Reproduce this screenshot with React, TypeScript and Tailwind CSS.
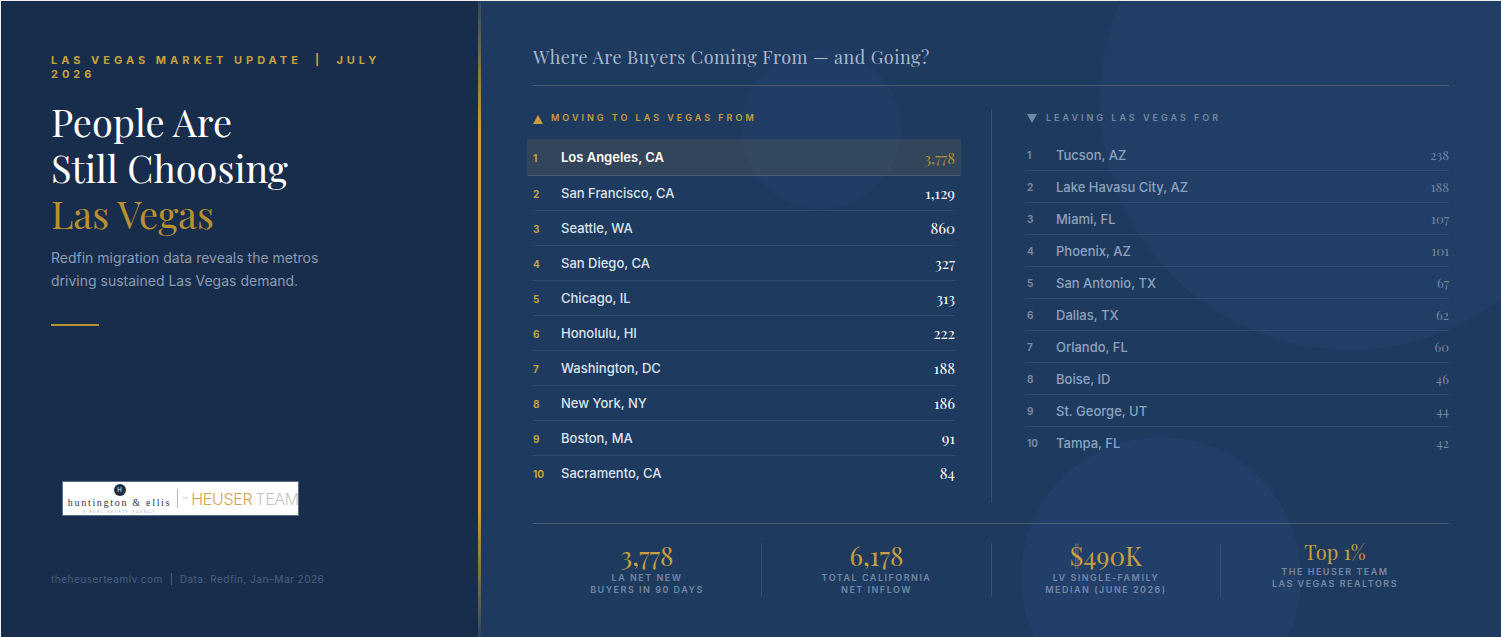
const serif = "font-['Playfair_Display','Liberation_Serif',serif]";

const toRows = [
  ["Los Angeles, CA", "3,778"],
  ["San Francisco, CA", "1,129"],
  ["Seattle, WA", "860"],
  ["San Diego, CA", "327"],
  ["Chicago, IL", "313"],
  ["Honolulu, HI", "222"],
  ["Washington, DC", "188"],
  ["New York, NY", "186"],
  ["Boston, MA", "91"],
  ["Sacramento, CA", "84"],
];
const fromRows = [
  ["Tucson, AZ", "238"],
  ["Lake Havasu City, AZ", "188"],
  ["Miami, FL", "107"],
  ["Phoenix, AZ", "101"],
  ["San Antonio, TX", "67"],
  ["Dallas, TX", "62"],
  ["Orlando, FL", "60"],
  ["Boise, ID", "46"],
  ["St. George, UT", "44"],
  ["Tampa, FL", "42"],
];
const stats = [
  ["3,778", "LA NET NEW", "BUYERS IN 90 DAYS", "text-[26px] -mt-[1px] mb-[1px]", "w-[229px] border-r"],
  ["6,178", "TOTAL CALIFORNIA", "NET INFLOW", "text-[26px] -mt-[1px] mb-[1px]", "w-[230px] border-r"],
  ["$490K", "LV SINGLE-FAMILY", "MEDIAN (JUNE 2026)", "text-[26px] -mt-[1px] mb-[1px]", "w-[229px] border-r"],
  ["Top 1%", "THE HEUSER TEAM", "LAS VEGAS REALTORS", "text-[20px] -mt-[2px] mb-[3px]", "w-[228px]"],
];

export default function App() {
  return (
    <div className="w-[1501px] h-[637px] overflow-hidden bg-[#f0f0f0] pt-px pl-px font-['Inter',sans-serif]">
      <div className="flex h-[636px] w-[1500px]">
        <aside className="w-[477px] h-full shrink-0 bg-[#182d4b] pt-[52px] pl-[50px] pr-[90px] pb-[51px] flex flex-col">
          <div className="text-[11px] leading-[14px] font-bold tracking-[4px] text-[#c9a03d] whitespace-pre-wrap">LAS VEGAS MARKET UPDATE  |  JULY 2026</div>
          <h1 className={`${serif} mt-[18px] text-[38px] leading-[46px] font-normal text-white`}>
            People Are<br />Still Choosing<br /><span className="text-[#b8912f]">Las Vegas</span>
          </h1>
          <p className="mt-[9px] text-[14px] leading-[23px] text-[#8a9bb4]">Redfin migration data reveals the metros<br />driving sustained Las Vegas demand.</p>
          <div className="mt-[32px] w-[48px] h-[2px] bg-[#b8912f]" />
          <div className="mt-[155px] ml-[11px] w-[237px] h-[35px] bg-white border border-[#5a6f8c] flex items-center overflow-hidden">
            <div className="w-[113px] flex flex-col items-center shrink-0 leading-none">
              <div className="w-[12px] h-[12px] rounded-full bg-[#1a2e4a] text-white text-[6px] flex items-center justify-center">H</div>
              <div className="font-['Liberation_Serif',serif] text-[10px] tracking-[1.7px] text-[#24364f] mt-[2px] whitespace-nowrap">huntington &amp; ellis</div>
              <div className="text-[4px] tracking-[1.3px] text-[#a4abb5] mt-[2px] whitespace-nowrap">A REAL ESTATE AGENCY</div>
            </div>
            <div className="w-px h-[19px] bg-[#b8bcc2] shrink-0 ml-[1px]" />
            <div className="ml-[5px] text-[16px] tracking-[-0.3px] font-light whitespace-nowrap flex items-center">
              <span className="text-[3.5px] tracking-normal text-[#d8a765] mr-[3px]">the</span>
              <span className="text-[#d8a050]">HEUSER</span>
              <span className="text-[#c4c4c4] ml-[3px]">TEAM</span>
            </div>
          </div>
          <div className="mt-auto text-[10px] leading-[14px] tracking-[0.5px] text-[#4a5f80] whitespace-nowrap flex items-center">
            <span>theheuserteamlv.com</span>
            <span className="mx-[8px] w-px h-[12px] bg-[#4a5f80]" />
            <span>Data: Redfin, Jan–Mar 2026</span>
          </div>
        </aside>
        <div className="w-[3px] h-full shrink-0 bg-[linear-gradient(to_bottom,#33455a,#c9a03d_20%,#c9a03d_80%,#33455a)]" />
        <main className="relative flex-1 h-full bg-[#1e3a5f] overflow-hidden pt-[42px] px-[52px]">
          <div className="absolute w-[160px] h-[160px] rounded-full bg-[#203d66] left-[260px] top-[48px]" />
          <div className="absolute w-[500px] h-[500px] rounded-full bg-[#213f66] left-[619px] top-[-151px]" />
          <div className="absolute w-[280px] h-[280px] rounded-full bg-[#223f6a] left-[540px] top-[436px]" />
          <div className="relative">
            <h2 className={`${serif} text-[18px] leading-[28px] tracking-[0.5px] font-normal text-[#a9b8cc] pb-[14px] border-b border-[#4b5d6f]`}>Where Are Buyers Coming From — and Going?</h2>
            <div className="flex mt-[24px] h-[393px]">
              <section className="w-[422px] shrink-0 mr-[36px] pt-px">
                <div className="flex items-center text-[9px] leading-[14px] font-semibold tracking-[3px] text-[#c9a03d] h-[14px]">
                  <svg width="10" height="9" viewBox="0 0 10 9" className="mr-[8px] mt-[3px]"><path d="M5 0L10 9H0z" fill="#c9a03d" /></svg>
                  MOVING TO LAS VEGAS FROM
                </div>
                <div className="mt-[14px]">
                  {toRows.map(([city, n], i) => i === 0 ? (
                    <div key={city} className="h-[37px] -mx-[6px] px-[6px] pt-[2px] flex items-center bg-[#c9a03d]/12 rounded-[2px] border-b border-[#4a5c6e]">
                      <span className="w-[28px] text-[10px] font-bold text-[#c9a03d]">1</span>
                      <span className="flex-1 text-[13px] font-semibold text-white">{city}</span>
                      <span className={`${serif} text-[15px] text-[#b8912f]`}>{n}</span>
                    </div>
                  ) : (
                    <div key={city} className={`h-[35px] pt-[2px] flex items-center border-b ${i < 9 ? "border-[#2f4b70]" : "border-transparent"}`}>
                      <span className="w-[28px] text-[10px] font-bold text-[#c9a03d]">{i + 1}</span>
                      <span className="flex-1 text-[13px] font-medium text-[#dbe4f0]">{city}</span>
                      <span className={`${serif} text-[15px] text-white mb-[1px]`}>{n}</span>
                    </div>
                  ))}
                </div>
              </section>
              <div className="w-px bg-[#33507a]" />
              <section className="flex-1 pl-[35px] pt-px">
                <div className="flex items-center text-[9px] leading-[14px] font-semibold tracking-[3px] text-[#7488a6] h-[14px]">
                  <svg width="10" height="9" viewBox="0 0 10 9" className="mr-[9px]"><path d="M0 0H10L5 9z" fill="#7488a6" /></svg>
                  LEAVING LAS VEGAS FOR
                </div>
                <div className="mt-[14px]">
                  {fromRows.map(([city, n], i) => (
                    <div key={city} className={`h-[32px] pt-[2px] flex items-center border-b ${i < 9 ? "border-[#2f4b70]" : "border-transparent"}`}>
                      <span className="w-[29px] text-[10px] font-bold text-[#7488a6]">{i + 1}</span>
                      <span className="flex-1 text-[13px] font-medium text-[#8ea2bf]">{city}</span>
                      <span className={`${serif} text-[13px] text-[#7488a6] mb-[2px]`}>{n}</span>
                    </div>
                  ))}
                </div>
              </section>
            </div>
            <div className="mt-[20px] border-t border-[#4b5d6f] pt-[19px] flex h-[74px]">
              {stats.map(([big, a, b, size, col]) => (
                <div key={a} className={`${col} border-[#33507a] flex flex-col items-center`}>
                  <div className={`${serif} ${size} leading-[1.1] text-[#c9a03d]`}>{big}</div>
                  <div className="text-[9px] leading-[12px] font-semibold tracking-[1.5px] text-[#7488a6] text-center whitespace-nowrap">{a}<br />{b}</div>
                </div>
              ))}
            </div>
          </div>
        </main>
      </div>
    </div>
  );
}
